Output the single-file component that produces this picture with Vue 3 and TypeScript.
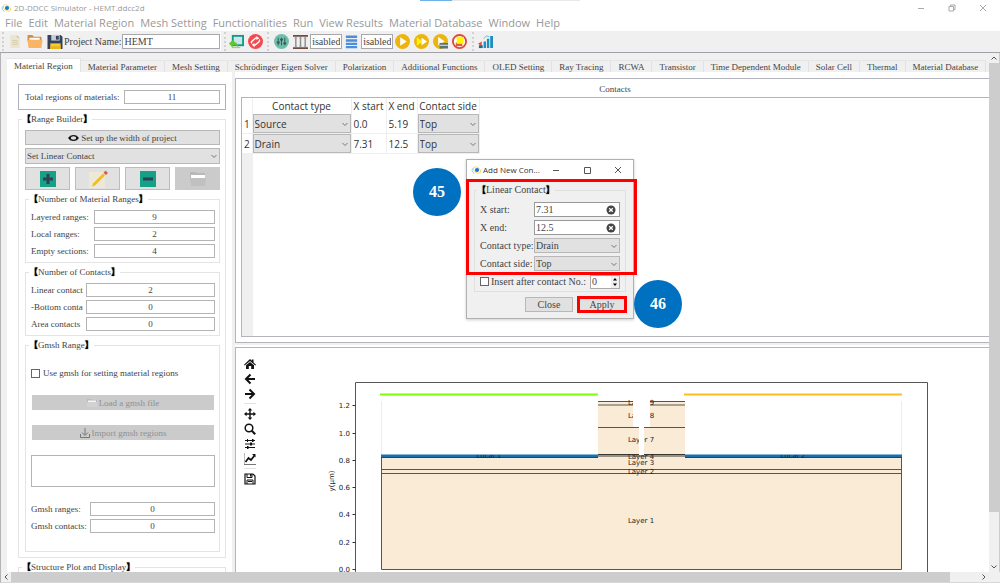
<script setup lang="ts">
import { ref } from 'vue'

interface CountRow { id: string; label: string; value: string }
interface ContactRow { type: string; start: string; end: string; side: string }

const menus = ['File', 'Edit', 'Material Region', 'Mesh Setting', 'Functionalities', 'Run', 'View Results', 'Material Database', 'Window', 'Help']
const tabs = ['Material Region', 'Material Parameter', 'Mesh Setting', 'Schrödinger Eigen Solver', 'Polarization', 'Additional Functions', 'OLED Setting', 'Ray Tracing', 'RCWA', 'Transistor', 'Time Dependent Module', 'Solar Cell', 'Thermal', 'Material Database']
const activeTab = ref('Material Region')

const project = ref('HEMT')
const useGmsh = ref(false)
const insertAfter = ref(false)
const insertNo = ref(0)
const xStart = ref('7.31')
const xEnd = ref('12.5')

const rangeRows: CountRow[] = [
  { id: 'layered', label: 'Layered ranges:', value: '9' },
  { id: 'local', label: 'Local ranges:', value: '2' },
  { id: 'empty', label: 'Empty sections:', value: '4' },
]
const contactCounts: CountRow[] = [
  { id: 'linear', label: 'Linear contact', value: '2' },
  { id: 'bottom', label: '-Bottom conta', value: '0' },
  { id: 'area', label: 'Area contacts', value: '0' },
]
const gmshRows: CountRow[] = [
  { id: 'gr', label: 'Gmsh ranges:', value: '0' },
  { id: 'gc', label: 'Gmsh contacts:', value: '0' },
]
const contacts: ContactRow[] = [
  { type: 'Source', start: '0.0', end: '5.19', side: 'Top' },
  { type: 'Drain', start: '7.31', end: '12.5', side: 'Top' },
]
const ticks = [
  { y: 406, t: '1.2' }, { y: 434, t: '1.0' }, { y: 461, t: '0.8' }, { y: 488, t: '0.6' },
  { y: 515, t: '0.4' }, { y: 543, t: '0.2' }, { y: 570, t: '0.0' },
]
</script>

<template>
  <div class="app">
    <header class="titlebar">
      <svg class="logo" viewBox="0 0 12 12"><ellipse cx="6" cy="6" rx="5" ry="3" fill="none" stroke="#f2d64b" stroke-width="1" transform="rotate(30 6 6)" /><path d="M1 4a5 4 0 0 0 2 6" fill="none" stroke="#7cc4ee" /><circle cx="6" cy="6" r="2.5" fill="#1677d8" /></svg>
      <h1>2D-DDCC Simulator - HEMT.ddcc2d</h1>
      <div class="wincontrols">
        <button aria-label="Minimize"><svg viewBox="0 0 8 8"><path d="M1 4.500h6" /></svg></button>
        <button aria-label="Restore"><svg viewBox="0 0 8 8"><path d="M1 2.500h4.500v4.500h-4.500zM2.500 2.500v-1.500h4.500v4.500h-1.500" /></svg></button>
        <button aria-label="Close window"><svg viewBox="0 0 8 8"><path d="M1 1l6 6M7 1l-6 6" /></svg></button>
      </div>
      <div class="progress"><span></span></div>
    </header>

    <nav class="menubar">
      <button v-for="m in menus" :key="m">{{ m }}</button>
    </nav>

    <div class="toolbar">
      <div class="group first">
        <button aria-label="New"><svg viewBox="0 0 16 16"><path d="M3 1h7l3 3v11H3z" fill="#ebe5cd" /><path d="M10 1l3 3h-3z" fill="#cfc8ab" /><path d="M5 7h6M5 9h6M5 11h6" stroke="#d4cdb2" /></svg></button>
        <button aria-label="Open"><svg viewBox="0 0 16 16"><path d="M0 2q0-1 1-1h4l2 2h7q1 0 1 1v4H0z" fill="#d98b3f" /><path d="M2 4h11v4H2z" fill="#fff" /><path d="M0 6h16l-1 8q0 1-1 1H2q-1 0-1-1z" fill="#f9b563" /></svg></button>
        <button aria-label="Save"><svg viewBox="0 0 16 16"><path d="M0 1h14l2 2v13H0z" fill="#34425c" /><path d="M4 1h9v6H4z" fill="#c7cdd6" /><path d="M9 2h3v4H9z" fill="#34425c" /><path d="M3 10h11v6H3z" fill="#f7ca31" /><path d="M3 13h11v3H3z" fill="#e9b51f" /></svg></button>
        <label for="project">Project Name:</label>
        <input id="project" v-model="project" class="project" type="text">
      </div>
      <div class="group pair">
        <button aria-label="Import picture"><svg viewBox="0 0 16 16"><path d="M3 1h13v12H3z" fill="#159b83" /><path d="M5 3h9v8H5z" fill="#c9e6ee" /><path d="M0 10l4-4v2q5 0 6 6q-3-3-6-2v3z" fill="#62c72f" /><path d="M3 14.500h9" stroke="#8bd35a" /></svg></button>
        <button aria-label="Reload"><svg viewBox="0 0 16 16"><circle cx="8" cy="8" r="8" fill="#f4494f" /><path d="M4 10q-1-2 1-3l3-2.500q1-.8 2.300-.3M12 6q1 2-1 3l-3 2.500q-1 .8-2.300.3" fill="none" stroke="#fff" stroke-width="1.500" /><path d="M9 2l3 2.500-3 2M7 14l-3-2.500 3-2" fill="#fff" /></svg></button>
      </div>
      <div class="group run">
        <button aria-label="Parameters"><svg viewBox="0 0 16 16"><circle cx="8" cy="8" r="8" fill="#6fbfa8" /><path d="M4.500 4v8M8 4v8M11.500 4v8" stroke="#35545a" /><path d="M3 9h3M6.500 6h3M10 10h3" stroke="#35545a" stroke-width="2" /></svg></button>
        <button aria-label="Columns"><svg viewBox="0 0 16 16"><path d="M0 1h16v2H0zM0 14h16v2H0z" fill="#6d4c41" /><path d="M3 3v11M8 3v11M13 3v11" stroke="#8b8b8b" stroke-width="1.500" /><path d="M1.500 4.500h3M6.500 4.500h3M11.500 4.500h3M1.500 13h3M6.500 13h3M11.500 13h3" stroke="#aaa" /></svg></button>
        <input class="state" type="text" value="Disabled" aria-label="Column state" readonly>
        <button aria-label="Stack"><svg viewBox="0 0 16 16"><path d="M2 3h12M2 7h12M2 10.500h12M2 14h12" stroke="#4b8fdc" stroke-width="2.600" /></svg></button>
        <input class="state" type="text" value="Disabled" aria-label="Stack state" readonly>
        <button aria-label="Run"><svg viewBox="0 0 16 16"><circle cx="8" cy="8" r="8" fill="#ecb40f" /><path d="M5.500 3.500l7 4.500-7 4.500z" fill="#fff" /></svg></button>
        <button aria-label="Run all"><svg viewBox="0 0 16 16"><circle cx="8" cy="8" r="8" fill="#ecb40f" /><path d="M8 4l6 4-6 4z" fill="#fff" /><path d="M3 3.500l6 4.500-6 4.500z" fill="#fdf800" /></svg></button>
        <button aria-label="Run from file"><svg viewBox="0 0 16 16"><circle cx="8" cy="8" r="8" fill="#ecb40f" /><path d="M5.500 3l7 5-7 4z" fill="#fff" /><path d="M7 9.500h9v6H7z" fill="#5d7474" /><path d="M7 12h9" stroke="#e9eeee" /></svg></button>
        <button aria-label="Stop"><svg viewBox="0 0 16 16"><circle cx="8" cy="8" r="7" fill="#fff" stroke="#d94a38" stroke-width="2" /><path d="M4 9h7v4H4z" fill="#e05a3c" /><path d="M5 3h7.500v7.500H5z" fill="#fdf800" /></svg></button>
      </div>
      <div class="group last">
        <button aria-label="Results"><svg viewBox="0 0 16 16"><path d="M6 8h2.500v7H6zM9.500 5h2.500v10H9.500zM13 2h3v13h-3z" fill="#1c8fc0" /><path d="M0 10.500l4-2.500v5z" fill="#e0523c" /><path d="M1 12h4v3H1z" fill="#26688c" /><path d="M6 5l3-3 3 1" stroke="#5fb8dd" fill="none" /></svg></button>
      </div>
    </div>

    <div class="viewport">
      <div class="workspace">
        <div class="tabs" role="tablist">
          <button v-for="t in tabs" :key="t" role="tab" :aria-selected="t === activeTab" :class="{ active: t === activeTab }" @click="activeTab = t">{{ t }}</button>
        </div>

        <div class="page">
          <aside class="side">
            <div class="total">
              <label for="total">Total regions of materials:</label>
              <input id="total" type="text" value="11" readonly>
            </div>

            <fieldset class="box">
              <legend><b>【</b>Range Builder<b>】</b></legend>
              <button class="btn">
                <svg class="eye" viewBox="0 0 12 8"><path d="M0 4l3-3v2h6v-2l3 3-3 3v-2H3v2z" fill="#111" /><ellipse cx="6" cy="4" rx="3.600" ry="2.600" fill="#e1e1e1" stroke="#111" stroke-width="1.200" /></svg>
                Set up the width of project
              </button>
              <span class="drop">
                <select aria-label="Builder action"><option>Set Linear Contact</option></select>
                <svg viewBox="0 0 8 5"><path d="M1.500 1l2.500 2.500 2.500-2.500" /></svg>
              </span>
              <div class="actions">
                <button aria-label="Add"><svg viewBox="0 0 16 16"><path d="M0 0h16v16H0z" fill="#16a085" /><path d="M6.500 3h3v3.500h3.500v3h-3.500v3.500h-3v-3.500H3v-3h3.500z" fill="#2f4154" /></svg></button>
                <button aria-label="Edit item"><svg class="pencil" viewBox="0 0 20 20"><path d="M1 3h16v16H1z" fill="#eee8d6" /><path d="M5 14.500L15 4.500l2 2L7 16.500l-3 1z" fill="#f0bd22" /><path d="M15.500 4l2-2.500 2.500 2.500-2 2z" fill="#e2574c" /></svg></button>
                <button aria-label="Remove"><svg viewBox="0 0 16 16"><path d="M0 0h16v16H0z" fill="#16a085" /><path d="M3 6.500h10v3H3z" fill="#2f4154" /></svg></button>
                <button aria-label="Open folder" disabled><svg viewBox="0 0 16 16"><path d="M0 1h6l1 1h8v6H0z" fill="#b8b8b8" /><path d="M1 4h14v3H1z" fill="#fff" /><path d="M0 7h16l-1 8H1z" fill="#c0c0c0" /></svg></button>
              </div>

              <fieldset class="box wide">
                <legend><b>【</b>Number of Material Ranges<b>】</b></legend>
                <div v-for="r in rangeRows" :key="r.id" class="row">
                  <label :for="r.id">{{ r.label }}</label><input :id="r.id" type="text" :value="r.value" readonly>
                </div>
              </fieldset>

              <fieldset class="box narrow">
                <legend><b>【</b>Number of Contacts<b>】</b></legend>
                <div v-for="r in contactCounts" :key="r.id" class="row">
                  <label :for="r.id">{{ r.label }}</label><input :id="r.id" type="text" :value="r.value" readonly>
                </div>
              </fieldset>

              <fieldset class="box gmsh">
                <legend><b>【</b>Gmsh Range<b>】</b></legend>
                <label class="check"><input v-model="useGmsh" type="checkbox">Use gmsh for setting material regions</label>
                <button class="btn off" disabled>
                  <svg class="ico" viewBox="0 0 10 10"><path d="M0 1h4l1 1h5v2H0z" fill="#bbb" /><path d="M1 2.500h8v2H1z" fill="#f5f5f5" /><path d="M0 4h10v5H0z" fill="#d2d2d2" /></svg>
                  Load a gmsh file
                </button>
                <button class="btn off" disabled>
                  <svg class="ico" viewBox="0 0 10 10"><path d="M5 0v7M2 4.500l3 3 3-3M.5 6v3.500h9V6" fill="none" stroke="#777" /></svg>
                  Import gmsh regions
                </button>
                <textarea aria-label="Gmsh log"></textarea>
                <div class="rows">
                  <div v-for="r in gmshRows" :key="r.id" class="row">
                    <label :for="r.id">{{ r.label }}</label><input :id="r.id" type="text" :value="r.value" readonly>
                  </div>
                </div>
              </fieldset>
            </fieldset>

            <fieldset class="box">
              <legend><b>【</b>Structure Plot and Display<b>】</b></legend>
            </fieldset>
          </aside>

          <main class="main">
            <section class="panel contacts">
              <h2>Contacts</h2>
              <div class="sheet">
                <table>
                  <thead>
                    <tr><th class="n"></th><th class="ct">Contact type</th><th class="xs">X start</th><th class="xe">X end</th><th class="cs">Contact side</th></tr>
                  </thead>
                  <tbody>
                    <tr v-for="(c, i) in contacts" :key="i">
                      <th class="n" scope="row">{{ i + 1 }}</th>
                      <td class="pick"><span class="drop"><select :aria-label="'Contact type ' + (i + 1)"><option>{{ c.type }}</option></select><svg viewBox="0 0 8 5"><path d="M1.500 1l2.500 2.500 2.500-2.500" /></svg></span></td>
                      <td>{{ c.start }}</td>
                      <td>{{ c.end }}</td>
                      <td class="pick"><span class="drop"><select :aria-label="'Contact side ' + (i + 1)"><option>{{ c.side }}</option></select><svg viewBox="0 0 8 5"><path d="M1.500 1l2.500 2.500 2.500-2.500" /></svg></span></td>
                    </tr>
                  </tbody>
                </table>
                <div class="gutter"></div>
              </div>
            </section>

            <section class="panel plot">
              <div class="plotbar">
                <button aria-label="Home"><svg viewBox="0 0 12 12"><path d="M6 1l1.800 1.800V1.500h1.700v3L12 6.700l-.7.8L6 3 .7 7.500 0 6.700z" /><path d="M6 3.900l4 3.400V11H7.200V8H4.800v3H2V7.300z" /></svg></button>
                <button aria-label="Back"><svg viewBox="0 0 12 12"><path d="M6.500 1.500L2 6l4.500 4.500M2 6h9" fill="none" stroke="#111" stroke-width="2" /></svg></button>
                <button aria-label="Forward"><svg viewBox="0 0 12 12"><path d="M5.500 1.500L10 6l-4.500 4.500M10 6H1" fill="none" stroke="#111" stroke-width="2" /></svg></button>
                <hr>
                <button aria-label="Pan"><svg viewBox="0 0 12 12"><path d="M6 0l2.300 2.600H6.700v2.700h2.700V3.700L12 6 9.400 8.300V6.700H6.700v2.700h1.600L6 12 3.700 9.400h1.600V6.700H2.600v1.600L0 6l2.600-2.300v1.600h2.700V2.600H3.700z" /></svg></button>
                <button aria-label="Zoom"><svg viewBox="0 0 12 12"><circle cx="5" cy="5" r="3.800" fill="none" stroke="#111" stroke-width="1.500" /><path d="M7.800 7.800l3.400 3.400" stroke="#111" stroke-width="2" /></svg></button>
                <button aria-label="Subplots"><svg viewBox="0 0 12 12"><path d="M1 2.500h10M1 6h10M1 9.500h10" stroke="#111" /><path d="M8 1h1.500v3H8zM6 4.500h2v3H6zM3 8h1.500v3H3zM3 1h1v3H3z" /></svg></button>
                <button aria-label="Axes"><svg viewBox="0 0 12 12"><path d="M0 0v11.500h12" fill="none" stroke="#777" /><path d="M1.500 9l3-4 2.500 2 3.500-4.500" fill="none" stroke="#111" stroke-width="1.700" /><path d="M8 1h3.500v3.500z" /></svg></button>
                <hr>
                <button aria-label="Save figure"><svg viewBox="0 0 12 12"><path d="M1 1h8l2 2v8H1z" fill="none" stroke="#111" stroke-width="1.200" /><path d="M3 1v3.500h5V1M3 11V7h6v4M4 8.500h4" fill="none" stroke="#111" /><path d="M6 1h1.500v2.500H6z" /></svg></button>
              </div>
              <svg class="chart" viewBox="260 349 729 240">
                <defs>
                  <clipPath id="band"><path d="M381 456h521v3H381z" /></clipPath>
                </defs>
                <path d="M355.500 600V383.500H927.500V600" fill="none" stroke="#555" />
                <g v-for="k in ticks" :key="k.t">
                  <path :d="`M352.500 ${k.y + .5}h3`" stroke="#333" />
                  <text x="350" :y="k.y + 3" text-anchor="end">{{ k.t }}</text>
                </g>
                <text transform="translate(334 482) rotate(-90)" text-anchor="middle">y(μm)</text>
                <path d="M381.500 402v54M901.500 402v54" stroke="#ececec" />
                <path d="M381 458h520.500v112.500H381z" fill="#faebd7" />
                <path d="M598 402h87v56h-87z" fill="#faebd7" />
                <path d="M380 395.500h218" stroke="#7cff0a" stroke-width="2" />
                <path d="M684 395.500h218" stroke="#fdbd22" stroke-width="2" />
                <path d="M598 402.500h87M598 406h87M598 428.500h87M381.500 470.500h520M381.500 474.500h520M381.500 458v112.500h520V458" fill="none" stroke="#5a544c" />
                <path d="M598 455.500h87M598 457h87" stroke="#3a3733" />
                <path d="M381 455.500h217v3H381zM685 455.500h217v3H685z" fill="#1770b0" />
                <path d="M381 458.500h217M685 458.500h217" stroke="#27455a" />
                <g text-anchor="middle">
                  <g clip-path="url(#band)"><text x="489" y="459">Local 1</text><text x="793" y="459">Local 2</text></g>
                  <text x="641" y="524">Layer 1</text>
                  <text x="641" y="475">Layer 2</text>
                  <text x="641" y="466">Layer 3</text>
                  <text x="641" y="460">Layer 4</text>
                  <text x="641" y="443">Layer 7</text>
                  <text x="641" y="419">Layer 8</text>
                  <text x="641" y="406">Layer 9</text>
                </g>
                <path d="M633 400h17v28h-6v28h-5v-28h-6z" fill="#fff" />
              </svg>
            </section>
          </main>
        </div>
      </div>
      <div class="vscroll" aria-hidden="true">
        <svg viewBox="0 0 10 10"><path d="M2.500 6.500L5 4l2.500 2.500" /></svg>
        <span class="track"><span class="thumb"></span></span>
        <svg viewBox="0 0 10 10"><path d="M2.500 3.500L5 6l2.500-2.500" /></svg>
      </div>
    </div>
    <div class="hscroll" aria-hidden="true">
      <svg viewBox="0 0 10 10"><path d="M6.500 2.500L4 5l2.500 2.500" /></svg>
      <span class="track"><span class="thumb"></span></span>
      <svg viewBox="0 0 10 10"><path d="M3.500 2.500L6 5 3.500 7.500" /></svg>
      <i></i>
    </div>

    <div class="dialog" role="dialog" aria-label="Add New Contact">
      <div class="dtitle">
        <svg class="logo" viewBox="0 0 12 12"><ellipse cx="6" cy="6" rx="5" ry="3" fill="none" stroke="#f2d64b" stroke-width="1" transform="rotate(30 6 6)" /><path d="M1 4a5 4 0 0 0 2 6" fill="none" stroke="#7cc4ee" /><circle cx="6" cy="6" r="2.500" fill="#1677d8" /></svg>
        <span>Add New Con...</span>
        <div class="wincontrols">
          <button aria-label="Minimize dialog"><svg viewBox="0 0 8 8"><path d="M1 4.500h6" /></svg></button>
          <button aria-label="Maximize dialog"><svg viewBox="0 0 8 8"><path d="M1.500 1.500h6v6h-6z" /></svg></button>
          <button aria-label="Close dialog"><svg viewBox="0 0 8 8"><path d="M1 1l6 6M7 1l-6 6" /></svg></button>
        </div>
      </div>
      <div class="dbody">
        <fieldset class="box">
          <legend><b>【</b>Linear Contact<b>】</b></legend>
          <div class="frow"><label for="xs">X start:</label><span class="clear"><input id="xs" v-model="xStart" type="text"><button aria-label="Clear X start" @click="xStart = ''"><svg viewBox="0 0 10 10"><circle cx="5" cy="5" r="4.500" fill="#444" /><path d="M3.200 3.200l3.600 3.600M6.800 3.200L3.200 6.800" stroke="#fff" stroke-width="1.300" /></svg></button></span></div>
          <div class="frow"><label for="xe">X end:</label><span class="clear"><input id="xe" v-model="xEnd" type="text"><button aria-label="Clear X end" @click="xEnd = ''"><svg viewBox="0 0 10 10"><circle cx="5" cy="5" r="4.500" fill="#444" /><path d="M3.200 3.200l3.600 3.600M6.800 3.200L3.200 6.800" stroke="#fff" stroke-width="1.300" /></svg></button></span></div>
          <div class="frow"><label for="ctype">Contact type:</label><span class="drop"><select id="ctype"><option>Drain</option></select><svg viewBox="0 0 8 5"><path d="M1.500 1l2.500 2.500 2.500-2.500" /></svg></span></div>
          <div class="frow"><label for="cside">Contact side:</label><span class="drop"><select id="cside"><option>Top</option></select><svg viewBox="0 0 8 5"><path d="M1.500 1l2.500 2.500 2.500-2.500" /></svg></span></div>
          <div class="frow insert">
            <label class="check"><input v-model="insertAfter" type="checkbox">Insert after contact No.:</label>
            <span class="spin">
              <input v-model.number="insertNo" type="text" inputmode="numeric" aria-label="Contact number">
              <span><button aria-label="Increase" @click="insertNo++"><svg viewBox="0 0 8 6"><path d="M2 4.500l2-2.500 2 2.500z" /></svg></button><button aria-label="Decrease" @click="insertNo--"><svg viewBox="0 0 8 6"><path d="M2 1.500l2 2.500 2-2.500z" /></svg></button></span>
            </span>
          </div>
        </fieldset>
        <div class="dfoot">
          <button class="btn">Close</button>
          <button class="btn marked">Apply</button>
        </div>
      </div>
      <div class="frame"></div>
    </div>
    <div class="step s45">45</div>
    <div class="step s46">46</div>
  </div>
</template>

<style>
html, body { margin: 0; height: 100%; overflow: hidden; background: #fff; }
</style>

<style scoped>
.app { position: relative; display: flex; flex-direction: column; height: 100vh; overflow: hidden; color: #444; font: 9px/12px "Liberation Serif", "Noto Sans CJK TC", serif; }
.app * { box-sizing: border-box; }
button, input, select, textarea { font: inherit; color: inherit; margin: 0; padding: 0; border: 0; border-radius: 0; outline: 0; background: none; }
svg { display: block; }

.titlebar { position: relative; display: flex; align-items: center; height: 15px; flex: none; padding-left: 1px; color: #999; font: 8px/12px "Open Sans", sans-serif; }
.titlebar h1 { margin: 0 0 0 1px; font: inherit; }
.logo { width: 12px; height: 10px; }
.wincontrols { display: flex; margin-left: auto; }
.wincontrols button { width: 31px; height: 14px; display: grid; place-items: center; }
.wincontrols svg { width: 8px; height: 8px; fill: none; stroke: #aaa; }
.titlebar .wincontrols { margin-right: 2px; }
.progress { position: absolute; top: 0; left: 42%; width: 16%; height: 1px; background: #e8e8e8; }
.progress span { display: block; width: 20%; height: 1px; background: #6fb1e8; }

.menubar { display: flex; gap: 6px; height: 16px; flex: none; padding-left: 5px; color: #999; font: 11px/16px "Open Sans", sans-serif; }
.menubar button { white-space: nowrap; }

.toolbar { display: flex; align-items: center; height: 21px; flex: none; background: #f0f0f0; font-size: 10px; }
.group { display: flex; align-items: center; height: 19px; gap: 4px; padding-left: 4px; border-left: 2px dotted #d2d2d2; }
.group svg { width: 15px; height: 15px; }
.group input { height: 15px; background: #fff; border: 1px solid #a8a8a8; padding: 0 1px; }
.group.first { margin-left: 2px; border-right: 1px solid #fff; }
.first { padding-left: 3px; }
.first svg { width: 16px; }
.first label { margin-left: -3px; }
.first .project { width: 98px; margin-left: -3px; }
.pair { margin-left: 3px; padding-left: 3px; }
.run { margin-left: 4px; padding-left: 5px; }
.run .state { width: 32px; margin: 0 -2px; direction: rtl; }
.last { margin-left: 5px; padding-left: 4px; }

.viewport { display: flex; flex: 1; min-height: 0; border-top: 1px solid #a0a0a8; background: #f0f0f0; }
.workspace { display: flex; flex-direction: column; flex: 1; min-width: 0; overflow: hidden; border-left: 1px solid #b4b4b8; padding-left: 6px; }
.tabs { display: flex; flex: none; align-items: flex-end; height: 19px; overflow: hidden; }
.tabs button { flex: none; height: 12px; padding: 0 7px; border-right: 1px solid #e2e2e2; background: #f0f0f0; white-space: nowrap; border-top: 1px solid #e6e6e6; line-height: 10px; }
.tabs .active { height: 14px; background: #fff; line-height: 12px; }
.page { display: flex; flex: 1; min-height: 0; background: #fff; }

.side { display: flex; flex-direction: column; gap: 3px; width: 228px; flex: none; padding: 12px 6px 0 11px; border-right: 3px solid #f0f0f0; overflow: hidden; }
.total { display: flex; align-items: center; justify-content: space-between; height: 26px; flex: none; padding: 0 5px 0 6px; border: 1px solid #b0b0b8; }
.total input { width: 96px; height: 14px; }
.side input[type="text"], textarea { border: 1px solid #b4b4b4; background: #fff; text-align: center; }
.box { display: flex; flex-direction: column; gap: 3px; min-width: 0; flex: none; margin: 0; padding: 5px 5px 5px 6px; border: 1px solid #e4e4e4; }
.box .box { padding: 5px 4px 4px 5px; }
legend { height: 12px; margin-left: -3px; padding: 0; white-space: nowrap; font-size: 9px; }
.box .box legend { margin-left: -2px; }
legend b { color: #000; font: 900 9px/12px "Noto Sans CJK TC", sans-serif; text-shadow: 0 0 1px #000; }
.btn { display: flex; align-items: center; justify-content: center; gap: 2px; height: 15px; border: 1px solid #b8b8b8; background: #e1e1e1; }
.btn.off { background: #cbcbcb; border-color: #cbcbcb; color: #909090; margin: 0 1px; }
.eye { width: 11px; height: 8px; }
.ico { width: 10px; height: 10px; }
.drop { position: relative; display: block; height: 16px; }
.drop select { display: block; width: 100%; height: 100%; padding: 0 1px; border: 1px solid #b8b8b8; background: #e1e1e1; appearance: none; }
.drop svg { position: absolute; right: 2px; top: calc(50% - 2px); width: 8px; height: 5px; fill: none; stroke: #777; pointer-events: none; }
.actions { display: grid; grid-template-columns: repeat(4, 1fr); gap: 5px; height: 23px; }
.actions button { display: grid; place-items: center; border: 1px solid #bcbcbc; background: #e1e1e1; }
.actions button:disabled { background: #cbcbcb; border-color: #cbcbcb; }
.actions svg { width: 16px; height: 16px; }
.actions .pencil { width: 20px; height: 20px; }
.row { display: flex; align-items: center; gap: 4px; height: 14px; }
.row label { flex: none; white-space: nowrap; }
.row input { flex: 1; min-width: 0; height: 14px; }
.wide label { width: 59px; }
.narrow label { width: 51px; }
.rows { display: flex; flex-direction: column; gap: 3px; }
.rows label { width: 55px; }
.box .gmsh { gap: 15px; padding-top: 15px; padding-bottom: 18px; }
.check { display: flex; align-items: center; gap: 3px; height: 14px; white-space: nowrap; }
.check input { appearance: none; width: 9px; height: 9px; border: 1px solid #666; background: #fff; }
textarea { display: block; height: 32px; resize: none; }

.main { display: flex; flex-direction: column; gap: 4px; flex: 1; min-width: 0; padding-top: 6px; background: #fff; }
.panel { border: 1px solid #b4b4bc; border-right: 0; }
.contacts { display: flex; flex-direction: column; height: 265px; flex: none; padding: 0 0 5px 5px; box-shadow: 0 2px 0 #f0f0f0; }
.contacts h2 { margin: 0; height: 18px; font: 9px/20px "Liberation Serif", serif; text-align: center; }
.sheet { display: flex; flex-direction: column; flex: 1; border: 1px solid #b4b4bc; border-right: 0; font: 10px/14px "Open Sans", sans-serif; }
.gutter { flex: 1; width: 11px; background: #f0f0f0; }
table { width: 237px; table-layout: fixed; border-collapse: collapse; color: #333; }
th, td { padding: 0; font-weight: 400; text-align: left; white-space: nowrap; border-right: 1px solid #efefef; }
thead th { height: 16px; text-align: center; }
tbody th, tbody td { height: 19px; border-bottom: 1px solid #efefef; }
.n { width: 10px; text-align: center; }
.ct { width: 99px; }
.xs { width: 35px; }
.xe { width: 31px; }
.cs { width: 62px; }
td { padding-left: 2px; }
td.pick { padding: 0; }
td .drop { height: 19px; }

.plot { display: flex; flex: 1; align-items: flex-start; min-height: 0; overflow: hidden; border-bottom: 0; }
.plotbar { display: flex; flex-direction: column; width: 24px; flex: none; padding: 8px 4px 0 8px; }
.plotbar button { height: 15px; display: grid; place-items: center; }
.plotbar svg { width: 12px; height: 12px; fill: #111; }
.plotbar hr { width: 100%; margin: 2px 0; border: 0; border-top: 1px solid #e2e2e2; }
.chart { flex: 1; min-width: 0; height: auto; font: 7px "DejaVu Sans", sans-serif; fill: #222; }

.vscroll { display: flex; flex-direction: column; width: 11px; flex: none; border-right: 1px solid #ccc; background: #f0f0f0; }
.hscroll { display: flex; height: 11px; flex: none; background: #f0f0f0; border-bottom: 1px solid #d8d8d8; border-left: 1px solid #b4b4b8; }
.vscroll svg, .hscroll svg { width: 10px; height: 10px; flex: none; fill: none; stroke: #555; }
.track { flex: 1; }
.thumb { display: block; background: #cdcdcd; }
.vscroll .thumb { height: 90%; }
.hscroll .thumb { width: 97%; height: 10px; }
.hscroll i { width: 11px; }

.dialog { position: absolute; left: 466px; top: 159px; width: 168px; border: 1px solid #b0b0b0; background: #f0f0f0; font-size: 10px; box-shadow: 0 1px 3px rgba(0, 0, 0, .2); }
.dtitle { display: flex; align-items: center; height: 19px; padding-left: 4px; background: #fff; color: #333; font: 8px/12px "Open Sans", sans-serif; white-space: nowrap; }
.dtitle .wincontrols svg { stroke: #555; }
.dbody { padding: 5px 7px 6px; }
.dbody .box { padding: 6px 5px 2px; border-color: #e0e0e0; }
.dbody legend { margin-left: -3px; font-size: 10px; }
.frow { display: flex; align-items: center; gap: 0; height: 15px; }
.frow > label:not(.check) { width: 54px; flex: none; white-space: nowrap; }
.frow .drop { flex: 1; height: 15px; }
.clear { display: flex; align-items: center; flex: 1; height: 15px; border: 1px solid #999; background: #fff; }
.clear input { flex: 1; min-width: 0; width: 0; padding-left: 1px; }
.clear button { margin-right: 3px; }
.clear svg { width: 10px; height: 10px; }
.insert { justify-content: space-between; }
.insert .check { gap: 2px; }
.spin { display: flex; width: 30px; height: 14px; border: 1px solid #aaa; background: #fff; }
.spin input { flex: 1; width: 0; min-width: 0; padding-left: 1px; }
.spin > span { display: flex; flex-direction: column; width: 8px; background: #f0f0f0; }
.spin button, .spin svg { width: 8px; height: 6px; }
.dfoot { display: flex; justify-content: flex-end; gap: 5px; margin-top: 5px; }
.dfoot .btn { width: 48px; }
.marked { outline: 3px solid #f00; outline-offset: -2px; }
.frame { position: absolute; left: -1px; top: 19px; width: 171px; height: 96px; border: 3px solid #f00; pointer-events: none; }
.step { position: absolute; display: grid; place-items: center; width: 48px; height: 48px; border-radius: 50%; background: #0070c0; color: #fff; font: bold 16px/20px "Liberation Serif", serif; }
.s45 { left: 413px; top: 168px; }
.s46 { left: 634px; top: 280px; }
</style>
